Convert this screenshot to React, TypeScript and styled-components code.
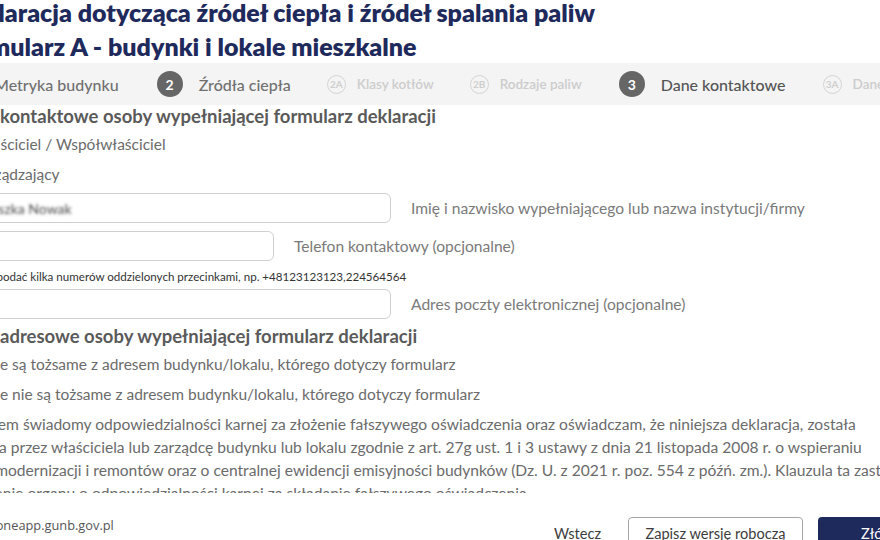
import React from 'react'
import styled, { createGlobalStyle } from 'styled-components'

const GlobalStyle = createGlobalStyle`
  html, body {
    margin: 0;
    padding: 0;
    background: #ffffff;
    overflow: hidden;
  }
  body {
    font-family: Lato, "Noto Sans", sans-serif;
  }
`

const Page = styled.div`
  width: 880px;
  height: 540px;
  display: flex;
  flex-direction: column;
  overflow: hidden;
  background: #fff;
`

const ScrollArea = styled.div`
  height: 493px;
  flex: none;
  overflow: hidden;
`

const Shifted = styled.div`
  margin-left: -48px;
  width: 980px;
`

const Title = styled.h1`
  margin: -5px 0 0;
  font-size: 25px;
  line-height: 34px;
  font-weight: 800;
  color: #1f2a5c;
  white-space: nowrap;
`

const Stepper = styled.ol`
  list-style: none;
  margin: 0;
  padding: 0;
  height: 42px;
  background: #f4f4f4;
  display: flex;
  align-items: center;
  white-space: nowrap;
`

const Step = styled.li<{ $gap: number }>`
  display: flex;
  align-items: center;
  margin-right: ${({ $gap }) => $gap}px;
`

const StepCircle = styled.span<{ $major?: boolean }>`
  display: inline-flex;
  align-items: center;
  justify-content: center;
  box-sizing: border-box;
  border-radius: 50%;
  width: ${({ $major }) => ($major ? 26 : 19)}px;
  height: ${({ $major }) => ($major ? 26 : 19)}px;
  margin-right: ${({ $major }) => ($major ? 16 : 11)}px;
  background: ${({ $major }) => ($major ? '#666666' : 'transparent')};
  border: ${({ $major }) => ($major ? 'none' : '1.5px solid #d4d4d4')};
  color: ${({ $major }) => ($major ? '#ffffff' : '#cfcfcf')};
  font-size: ${({ $major }) => ($major ? 14 : 10)}px;
  font-weight: 700;
`

const StepLabel = styled.span<{ $major?: boolean; $current?: boolean }>`
  font-size: ${({ $major }) => ($major ? 16 : 13.5)}px;
  font-weight: ${({ $major }) => ($major ? 500 : 600)};
  color: ${({ $major, $current }) => ($current ? '#555555' : $major ? '#707070' : '#cccccc')};
`

const SectionHeading = styled.h2<{ $top: number }>`
  margin: ${({ $top }) => $top}px 0 0;
  font-size: 18.5px;
  line-height: 22px;
  font-weight: 700;
  color: #5a5a5a;
  white-space: nowrap;
`

const RadioRow = styled.label<{ $top?: number }>`
  display: flex;
  align-items: center;
  height: 30px;
  margin: ${({ $top }) => $top ?? 0}px 0 0 -4px;
  font-size: 15.5px;
  color: #6b6b6b;
  white-space: nowrap;
  cursor: pointer;
`

const RadioDot = styled.span`
  width: 16px;
  height: 16px;
  box-sizing: border-box;
  border-radius: 50%;
  border: 1.5px solid #999;
  margin-right: 8px;
  flex: none;
`

const FieldRow = styled.div<{ $top: number }>`
  display: flex;
  align-items: center;
  gap: 20px;
  margin-top: ${({ $top }) => $top}px;
`

const TextInput = styled.input<{ $width: number; $masked?: boolean }>`
  width: ${({ $width }) => $width}px;
  height: 30px;
  box-sizing: border-box;
  border: 1px solid #cfcfcf;
  border-radius: 6px;
  padding: 0 10px;
  font-family: inherit;
  font-size: 14px;
  background: #fff;
  outline: none;
  color: ${({ $masked }) => ($masked ? 'transparent' : '#444')};
  text-shadow: ${({ $masked }) => ($masked ? '0 0 3px rgba(60,60,60,0.9)' : 'none')};
`

const FieldLabel = styled.span`
  font-size: 15.6px;
  color: #7a7a7a;
  white-space: nowrap;
`

const Hint = styled.p`
  margin: 8px 0 0 7px;
  font-size: 11.6px;
  line-height: 16px;
  color: #333;
  white-space: nowrap;
`

const Consent = styled.label`
  display: block;
  margin: 4px 0 0 2px;
  font-size: 15.6px;
  line-height: 23px;
  color: #6b6b6b;
  white-space: nowrap;
`

const CheckBox = styled.span`
  display: inline-block;
  vertical-align: -3px;
  width: 15px;
  height: 15px;
  box-sizing: border-box;
  border: 1.5px solid #999;
  border-radius: 2px;
  margin-right: 2px;
`

const Footer = styled.footer`
  height: 47px;
  flex: none;
  overflow: hidden;
`

const FooterBar = styled.div`
  display: flex;
  align-items: flex-start;
  padding-top: 24px;
`

const StatusUrl = styled.span`
  font-family: "Open Sans", "Noto Sans", sans-serif;
  font-size: 12.8px;
  color: #555;
  margin-top: -1px;
  margin-left: -6px;
  margin-right: auto;
`

const Button = styled.button<{ $kind: 'text' | 'outline' | 'primary' }>`
  height: 33px;
  box-sizing: border-box;
  font-family: inherit;
  font-size: 14.6px;
  border-radius: 4px;
  cursor: pointer;
  margin-left: ${({ $kind }) => ($kind === 'text' ? 0 : 15)}px;
  padding: ${({ $kind }) => ($kind === 'text' ? '0 12px 0 22px' : '0 12px')};
  border: ${({ $kind }) => ($kind === 'outline' ? '1px solid #a5a5a5' : 'none')};
  background: ${({ $kind }) => ($kind === 'primary' ? '#1f2a5c' : '#fff')};
  color: ${({ $kind }) => ($kind === 'primary' ? '#fff' : '#3d3d3d')};
  width: ${({ $kind }) => ($kind === 'outline' ? '175px' : $kind === 'primary' ? '114px' : 'auto')};
`

const steps = [
  { num: '1', label: 'Metryka budynku', major: true, gap: 38 },
  { num: '2', label: 'Źródła ciepła', major: true, gap: 36 },
  { num: '2A', label: 'Klasy kotłów', major: false, gap: 36 },
  { num: '2B', label: 'Rodzaje paliw', major: false, gap: 37 },
  { num: '3', label: 'Dane kontaktowe', major: true, gap: 37, current: true },
  { num: '3A', label: 'Dane adresowe', major: false, gap: 36 },
]

export default function App() {
  return (
    <Page>
      <GlobalStyle />
      <ScrollArea>
        <Shifted>
          <Title>
            Deklaracja dotycząca źródeł ciepła i źródeł spalania paliw
            <br />
            Formularz A - budynki i lokale mieszkalne
          </Title>

          <Stepper>
            {steps.map((s) => (
              <Step key={s.num} $gap={s.gap}>
                <StepCircle $major={s.major}>{s.num}</StepCircle>
                <StepLabel $major={s.major} $current={s.current}>
                  {s.label}
                </StepLabel>
              </Step>
            ))}
          </Stepper>

          <SectionHeading $top={0}>Dane kontaktowe osoby wypełniającej formularz deklaracji</SectionHeading>
          <RadioRow $top={2}>
            <RadioDot />
            Właściciel / Współwłaściciel
          </RadioRow>
          <RadioRow>
            <RadioDot />
            Zarządzający
          </RadioRow>

          <FieldRow $top={4}>
            <TextInput $width={439} $masked defaultValue="Agnieszka Nowak" />
            <FieldLabel>Imię i nazwisko wypełniającego lub nazwa instytucji/firmy</FieldLabel>
          </FieldRow>
          <FieldRow $top={8}>
            <TextInput $width={322} />
            <FieldLabel>Telefon kontaktowy (opcjonalne)</FieldLabel>
          </FieldRow>
          <Hint>Można podać kilka numerów oddzielonych przecinkami, np. +48123123123,224564564</Hint>
          <FieldRow $top={4}>
            <TextInput $width={439} />
            <FieldLabel>Adres poczty elektronicznej (opcjonalne)</FieldLabel>
          </FieldRow>

          <SectionHeading $top={6}>Dane adresowe osoby wypełniającej formularz deklaracji</SectionHeading>
          <RadioRow $top={2}>
            <RadioDot />
            Dane są tożsame z adresem budynku/lokalu, którego dotyczy formularz
          </RadioRow>
          <RadioRow>
            <RadioDot />
            Dane nie są tożsame z adresem budynku/lokalu, którego dotyczy formularz
          </RadioRow>

          <Consent>
            <CheckBox />
            Jestem świadomy odpowiedzialności karnej za złożenie fałszywego oświadczenia oraz oświadczam, że niniejsza deklaracja, została
            <br />
            złożona przez właściciela lub zarządcę budynku lub lokalu zgodnie z art. 27g ust. 1 i 3 ustawy z dnia 21 listopada 2008 r. o wspieraniu
            <br />
            termomodernizacji i remontów oraz o centralnej ewidencji emisyjności budynków (Dz. U. z 2021 r. poz. 554 z późń. zm.). Klauzula ta zastępuje
            <br />
            pouczenie organu o odpowiedzialności karnej za składanie fałszywego oświadczenia.
          </Consent>
        </Shifted>
      </ScrollArea>

      <Footer>
        <Shifted>
          <FooterBar>
            <StatusUrl>https://zoneapp.gunb.gov.pl</StatusUrl>
            <Button $kind="text">Wstecz</Button>
            <Button $kind="outline">Zapisz wersję roboczą</Button>
            <Button $kind="primary">Złóż</Button>
          </FooterBar>
        </Shifted>
      </Footer>
    </Page>
  )
}
